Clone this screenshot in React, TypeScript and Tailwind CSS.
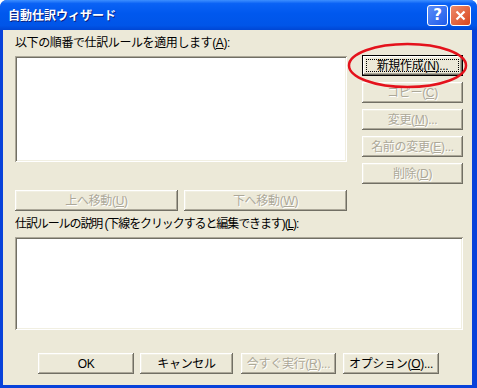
import { ReactNode } from "react";

const raised =
  "shadow-[inset_-1px_-1px_0_#716F64,inset_1px_1px_0_#FFFFFF,inset_-2px_-2px_0_#ACA899,inset_2px_2px_0_#F1EFE2]";
const sunken =
  "shadow-[inset_1px_1px_0_#ACA899,inset_-1px_-1px_0_#FFFFFF,inset_2px_2px_0_#716F64,inset_-2px_-2px_0_#F1EFE2]";

function Btn({
  children,
  disabled,
  def,
  className,
}: {
  children: ReactNode;
  disabled?: boolean;
  def?: boolean;
  className?: string;
}) {
  return (
    <div
      className={
        "relative h-[21px] box-border flex items-center justify-center bg-[#ECE9D8] " +
        (def ? "border border-black " : "") +
        raised +
        " " +
        (className ?? "")
      }
    >
      {def && <div className="absolute inset-[3px] border border-dotted border-black" />}
      <span
        className={
          "whitespace-nowrap tracking-[-0.3px] " +
          (disabled ? "text-[#ACA899] [text-shadow:1px_1px_0_#FFFFFF]" : "text-black")
        }
      >
        {children}
      </span>
    </div>
  );
}

export default function App() {
  return (
    <div className="relative w-[477px] h-[388px] flex flex-col bg-[#0842DA] rounded-t-[7px] font-['Liberation_Sans','Noto_Sans_CJK_JP',sans-serif] text-[12px] leading-[16px]">
      {/* title bar */}
      <div className="h-[30px] shrink-0 rounded-t-[7px] bg-[linear-gradient(to_bottom,#3D8FFF_0%,#0A62F5_12%,#0058EE_45%,#0055E8_85%,#0046D4_100%)] flex items-center pl-[8px] pr-[6px]">
        <span className="flex-1 text-white font-bold text-[12px] [text-shadow:1px_1px_0_#0A1F80] font-['Noto_Sans_CJK_JP',sans-serif]">
          自動仕訳ウィザード
        </span>
        <div className="w-[21px] h-[21px] rounded-[3px] border border-white bg-[linear-gradient(135deg,#5A8DF8,#1F5BEB)] flex items-center justify-center text-white font-bold text-[15px] leading-none font-['DejaVu_Sans',sans-serif]">
          ?
        </div>
        <div className="ml-[2px] w-[21px] h-[21px] rounded-[3px] border border-white bg-[linear-gradient(135deg,#EE8B6A,#D8461E)] flex items-center justify-center">
          <svg width="11" height="11" viewBox="0 0 11 11">
            <path d="M1.5 1.5 L9.5 9.5 M9.5 1.5 L1.5 9.5" stroke="white" strokeWidth="2.2" />
          </svg>
        </div>
      </div>

      {/* body */}
      <div className="flex-1 ml-[3px] mr-[5px] mb-[3px] bg-[#ECE9D8] pl-[12px] flex flex-col">
        <div className="pt-[5px] h-[21px] whitespace-nowrap tracking-[-0.4px]">
          以下の順番で仕訳ルールを適用します(<u>A</u>):
        </div>
        <div className="mt-[5px] flex">
          <div className="w-[332px] flex flex-col">
            <div className={"h-[106px] bg-white " + sunken} />
            <div className="mt-[28px] flex gap-[6px]">
              <Btn disabled className="w-[163px]">
                上へ移動(<u>U</u>)
              </Btn>
              <Btn disabled className="w-[163px]">
                下へ移動(<u>W</u>)
              </Btn>
            </div>
          </div>
          <div className="ml-[15px] -mt-[1px] w-[101px] flex flex-col gap-[6px]">
            <Btn def className="w-[101px]">
              新規作成(<u>N</u>)...
            </Btn>
            <Btn disabled className="w-[101px]">
              コピー(<u>C</u>)
            </Btn>
            <Btn disabled className="w-[101px]">
              変更(<u>M</u>)...
            </Btn>
            <Btn disabled className="w-[101px]">
              名前の変更(<u>E</u>)...
            </Btn>
            <Btn disabled className="w-[101px]">
              削除(<u>D</u>)
            </Btn>
          </div>
        </div>
        <div className="mt-[5px] h-[16px] whitespace-nowrap tracking-[-1.1px]">
          仕訳ルールの説明 (下線をクリックすると編集できます)(<u>L</u>):
        </div>
        <div className={"mt-[5px] w-[448px] h-[93px] bg-white " + sunken} />
        <div className="mt-[23px] ml-[23px] flex">
          <Btn className="w-[96px]">OK</Btn>
          <Btn className="ml-[6px] w-[93px]">キャンセル</Btn>
          <Btn disabled className="ml-[8px] w-[95px]">
            今すぐ実行(<u>R</u>)...
          </Btn>
          <Btn className="ml-[7px] w-[96px]">
            オプション(<u>O</u>)...
          </Btn>
        </div>
      </div>

      {/* red annotation ellipse */}
      <svg className="absolute left-0 top-0 pointer-events-none" width="477" height="388">
        <ellipse cx="407.5" cy="65.5" rx="58.5" ry="21.5" fill="none" stroke="#E4121C" strokeWidth="2.5" />
      </svg>
    </div>
  );
}
